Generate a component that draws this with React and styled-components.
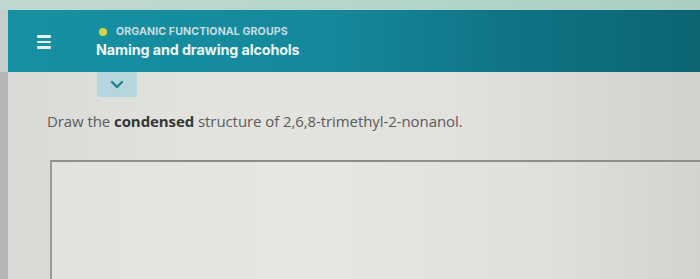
import React from 'react';
import styled, { createGlobalStyle } from 'styled-components';

const GlobalStyle = createGlobalStyle`
  html, body {
    margin: 0;
    padding: 0;
    height: 100%;
    overflow: hidden;
  }
  #root {
    height: 100%;
  }
`;

const Page = styled.div`
  height: 100%;
  display: flex;
  flex-direction: column;
  background: #d9dad6;
`;

const TopStrip = styled.div`
  height: 10px;
  flex-shrink: 0;
  background: linear-gradient(90deg, #c4d8d2 0%, #b6d6cc 50%, #a9cfc3 100%);
`;

const Body = styled.div`
  flex: 1;
  display: flex;
  min-height: 0;
`;

const Rail = styled.div`
  width: 8px;
  flex-shrink: 0;
  background: linear-gradient(180deg, #c6cdcd 0px, #c6cdcd 62px, #b3b8b7 62px, #b3b8b7 100%);
`;

const Main = styled.div`
  flex: 1;
  display: flex;
  flex-direction: column;
  min-width: 0;
  background: linear-gradient(90deg, #d9dad6 0%, #e3e4e0 30%, #e1e1dd 65%, #d3d1cd 100%);
`;

const Header = styled.header`
  height: 62px;
  flex-shrink: 0;
  display: flex;
  align-items: center;
  padding-left: 29px;
  gap: 45px;
  background: linear-gradient(90deg, #1790a2 0%, #15899c 45%, #0f7283 75%, #0c6472 100%);
  font-family: Inter, "Noto Sans", sans-serif;
`;

const Burger = styled.div`
  width: 14px;
  display: flex;
  flex-direction: column;
  gap: 3px;
  margin-top: 2px;

  span {
    display: block;
    height: 2.4px;
    border-radius: 1px;
    background: #e4f1f2;
  }
`;

const TitleBlock = styled.div`
  display: flex;
  flex-direction: column;
  gap: 4px;
  margin-top: 2px;
`;

const Topic = styled.div`
  display: flex;
  align-items: center;
  gap: 9px;
  padding-left: 3px;
  font-size: 10.6px;
  font-weight: 700;
  letter-spacing: 0.1px;
  color: #c5dde1;
  line-height: 12px;
`;

const Dot = styled.span`
  width: 8px;
  height: 8px;
  border-radius: 50%;
  background: #d3d44a;
`;

const Title = styled.div`
  font-size: 14.3px;
  font-weight: 700;
  color: #eef6f6;
  line-height: 16px;
  letter-spacing: -0.1px;
`;

const Tab = styled.button`
  width: 40px;
  height: 25px;
  margin-left: 89px;
  padding: 0;
  border: none;
  border-radius: 0 0 3px 3px;
  background: #b6d6dd;
  display: flex;
  align-items: center;
  justify-content: center;
`;

const Question = styled.p`
  margin: 15px 0 0 39px;
  font-family: "Open Sans", "DejaVu Sans", sans-serif;
  font-size: 15px;
  line-height: 19px;
  color: #5a5b5b;
  letter-spacing: -0.08px;

  b {
    color: #353636;
    font-weight: 700;
  }
`;

const AnswerBox = styled.div`
  flex: 1;
  margin: 29px -20px 0 42px;
  border-top: 2px solid #8d8e8b;
  border-left: 2px solid #9a9b98;
  background: linear-gradient(90deg, #e2e2de 0%, #e6e6e2 40%, #e0dfdb 75%, #d3d1cd 100%);
`;

export default function App() {
  return (
    <>
      <GlobalStyle />
      <Page>
        <TopStrip />
        <Body>
          <Rail />
          <Main>
            <Header>
              <Burger>
                <span />
                <span />
                <span />
              </Burger>
              <TitleBlock>
                <Topic>
                  <Dot />
                  ORGANIC FUNCTIONAL GROUPS
                </Topic>
                <Title>Naming and drawing alcohols</Title>
              </TitleBlock>
            </Header>
            <Tab aria-label="Expand">
              <svg width="14" height="9" viewBox="0 0 14 9">
                <path d="M2 2 L7 7 L12 2" fill="none" stroke="#1f8193" strokeWidth="2.4" strokeLinecap="round" strokeLinejoin="round" />
              </svg>
            </Tab>
            <Question>
              Draw the <b>condensed</b> structure of 2,6,8-trimethyl-2-nonanol.
            </Question>
            <AnswerBox />
          </Main>
        </Body>
      </Page>
    </>
  );
}
